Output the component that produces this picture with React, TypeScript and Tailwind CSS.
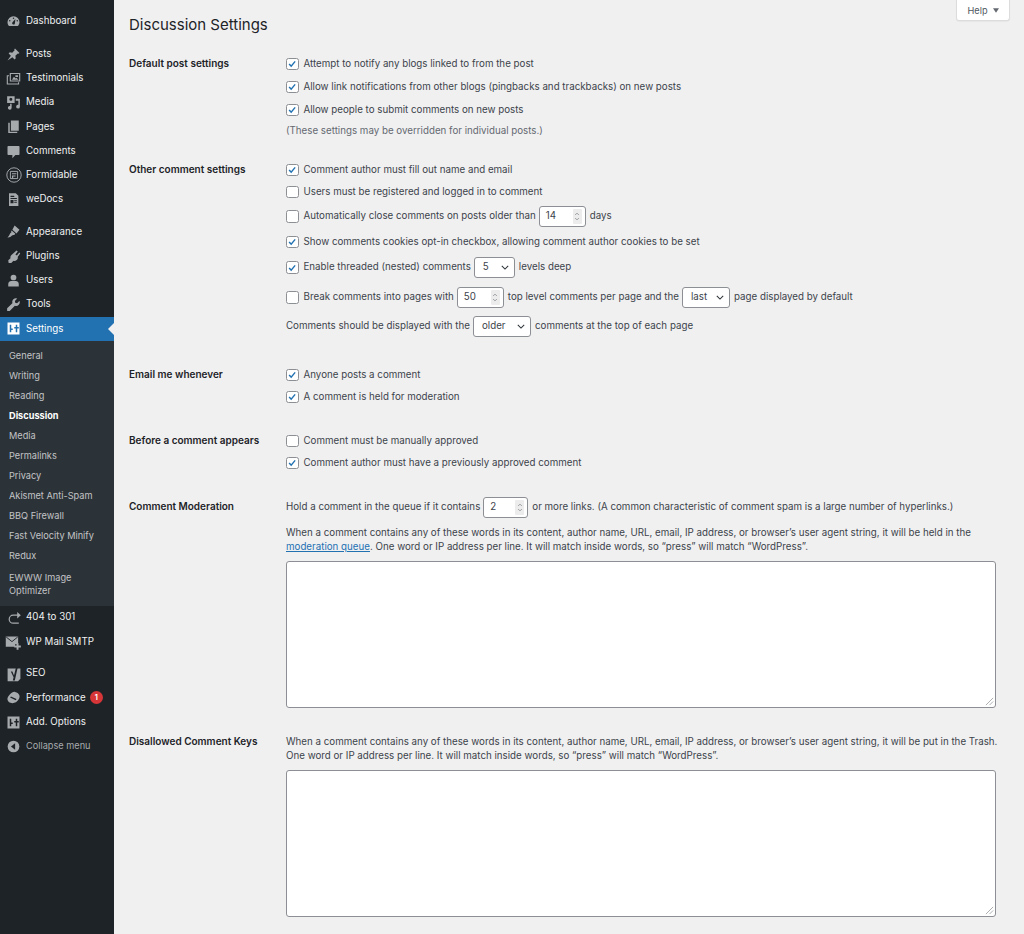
import type { ReactNode } from "react";

const font = "font-['Inter',sans-serif]";

function Glyph({ children }: { children: ReactNode }) {
  return <svg viewBox="0 0 20 20" className="h-[15px] w-[15px] fill-[#a7aaad]" aria-hidden="true">{children}</svg>;
}

const icons: Record<string, ReactNode> = {
  dashboard: <Glyph><path d="M10 3a8 8 0 0 0-8 8c0 2 .7 3.700 2 5h12a7.800 7.800 0 0 0 2-5 8 8 0 0 0-8-8zm0 1.500a1 1 0 1 1 0 2 1 1 0 0 1 0-2zM5 10a1 1 0 1 1 0-2 1 1 0 0 1 0 2zm6.500 3.500a2 2 0 0 1-3.400-1.500c.2-.8 4.400-5.500 4.400-5.500s-.4 6.300-1 7zM15 10a1 1 0 1 1 0-2 1 1 0 0 1 0 2z" fillRule="evenodd" /></Glyph>,
  posts: <Glyph><path d="M12 2l6 6-1.300 1-1-.5-3.200 3.200.5 3.300-1.500 1.500-3-3L2 18l4.500-6.500-3-3L5 7l3.300.5 3.200-3.200-.5-1z" /></Glyph>,
  testimonials: <Glyph><path fillRule="evenodd" d="M5 2.500h14v11.500H5zM6.500 4v8.500h11V4zM8 11.500l2.500-4 2.500 2.500 1-1 2.500 2.500zM12.500 5.500h3.500V8h-3.500zM1 5.500h3V7H2.500v9.500H16V15h1.500v3H1z" /></Glyph>,
  media: <Glyph><path fillRule="evenodd" d="M1.500 1.500h10v9h-10zM6.500 3.500a2 2 0 1 0 0 4 2 2 0 0 0 0-4zM13 5h5.500v10.500a2.500 2.500 0 1 1-2-2.400V7.500H13zM7.500 11.500v5.500a2.500 2.500 0 1 1-2-2.400v-3.100z" /></Glyph>,
  pages: <Glyph><path d="M6.500 2H17v13.500H6.500zM3 5h2v12h10v1.500H3z" /></Glyph>,
  comments: <Glyph><path d="M3 2.500h14a1 1 0 0 1 1 1v10a1 1 0 0 1-1 1h-4.500L8.500 19v-4.500H3a1 1 0 0 1-1-1v-10a1 1 0 0 1 1-1z" /></Glyph>,
  formidable: <svg viewBox="0 0 20 20" className="h-[16px] w-[16px]" aria-hidden="true"><circle cx="10" cy="10" r="9" fill="none" stroke="#a7aaad" strokeWidth="1.200" /><path d="M5.500 5.500h9v9h-9z" fill="none" stroke="#a7aaad" strokeWidth="1.200" /><path d="M7.500 7.800h5.500v1.300H7.500zM7.500 10.500h4.500v1.300H9v2H7.500z" fill="#a7aaad" /></svg>,
  wedocs: <Glyph><path fillRule="evenodd" d="M4 1.500h9l3.500 3.500v13.500H4zM6 5v1.500h5V5zM6 8v1.200h8.500V8zM6 10.500V15h4v-4.500zM11 10.500v1.200h3.500v-1.200zM11 13v1.200h3.500V13z" /></Glyph>,
  appearance: <Glyph><path d="M11.500 2l6.500 5.500-4 5-5.500-5zM7.500 8.500l5 4.500-1.500 1.800c-1.200-.6-2.400-.2-3.400 1-1.400 1.700-3.600 2.500-5.600 2.200 1.300-1.200 2.400-2.700 3-4.400.4-1.300 1.200-2.200 2.300-2.600l-.5-1z" /></Glyph>,
  plugins: <Glyph><path d="M14 2l1.700 1.200-3.200 4 2 1.500 3.200-4L19 6l-3.500 4.500c.7 1.500.2 3-1.200 4.200-1.500 1.200-3 1.500-4.300 1L7 18.500H3.500L3 15l3-2.800c-.4-1.500 0-3 1.300-4.200z" /></Glyph>,
  users: <Glyph><circle cx="10" cy="6" r="3.800" /><path d="M3 18v-3.500C3 12 5 10.500 7 10.500h6c2 0 4 1.500 4 4V18z" /></Glyph>,
  tools: <Glyph><path d="M18 5l-3.200 3.200-2.500-.5-.5-2.500L15 2a5 5 0 0 0-6.500 6.200L1.500 15v3.500H5l6.800-6.800A5 5 0 0 0 18 5z" /></Glyph>,
  settings: <svg viewBox="0 0 20 20" className="h-[15px] w-[15px]" aria-hidden="true"><path d="M2 2h16v16H2z" fill="#fff" /><path d="M5 5h2v5h2v2H7v3H5zM13 5h2v3h2v2h-2v5h-2v-5h-2V8h2z" fill="#2271b1" /></svg>,
  redirect: <svg viewBox="0 0 20 20" className="h-[16px] w-[16px] fill-none stroke-[#a7aaad]" strokeWidth="1.500" aria-hidden="true"><path d="M15 6.500H9a5 5 0 0 0 0 10h7" /><path d="M14 2.500l4.500 4-4.500 4z" fill="#a7aaad" stroke="none" /></svg>,
  mail: <svg viewBox="0 0 22 20" className="h-[16px] w-[17px]" aria-hidden="true"><path d="M1 3h16v10h-4v3H1z" fill="#a7aaad" /><path d="M1.500 3.500L9 9.500l7.500-6" fill="none" stroke="#1d2327" strokeWidth="1.200" /><path d="M15 11.500h2.500v3h3V17h-3v3H15v-3h-3v-2.500h3z" fill="#a7aaad" /></svg>,
  seo: <svg viewBox="0 0 20 20" className="h-[16px] w-[16px]" aria-hidden="true"><path d="M2 3h16v13l-3 3H2z" fill="#a7aaad" /><path d="M6 7h2l2 5 2.500-10.500h2.200L11 18H8.500l1-4z" fill="#1d2327" /></svg>,
  performance: <Glyph><path fillRule="evenodd" d="M12 2.500c3 .5 5.500 2.500 6 5 .4 2-.5 4-1.500 5.500-1.500 2.500-4.500 4.500-8 4.500-3.500 0-6-2-6.500-4.500-.5-2.200.5-4.500 2.500-6.500C6.500 4.500 9 2.200 12 2.500zM6.500 8.500l-1 1.500 7.500 3.500 1-1.500z" /></Glyph>,
  options: <Glyph><path fillRule="evenodd" d="M2 2h16v16H2zM5 5v10h2v-3h2v-2H7V5zM13 5v3h-2v2h2v5h2v-5h2V8h-2V5z" /></Glyph>,
};

const groupOne = [["Dashboard", "dashboard"]];
const groupTwo = [["Posts", "posts"], ["Testimonials", "testimonials"], ["Media", "media"], ["Pages", "pages"], ["Comments", "comments"], ["Formidable", "formidable"], ["weDocs", "wedocs"]];
const groupThree = [["Appearance", "appearance"], ["Plugins", "plugins"], ["Users", "users"], ["Tools", "tools"]];
const groupFour = [["404 to 301", "redirect"], ["WP Mail SMTP", "mail"]];
const submenu = ["General", "Writing", "Reading", "Discussion", "Media", "Permalinks", "Privacy", "Akismet Anti-Spam", "BBQ Firewall", "Fast Velocity Minify", "Redux"];

function MenuItem({ label, icon, badge }: { label: string; icon: string; badge?: string }) {
  return <div className="flex h-[24.25px] items-center text-[9.75px] text-[#f0f0f1]">
    <span className="flex w-[26px] justify-center pl-[1px]">{icons[icon]}</span>
    <span>{label}</span>
    {badge ? <span className="ml-[4px] flex h-[13px] w-[13px] items-center justify-center rounded-full bg-[#d63638] text-[7.5px] font-semibold text-white">{badge}</span> : null}
  </div>;
}

function Sidebar() {
  return <aside className="flex w-[114px] shrink-0 flex-col bg-[#1d2327] pt-[9px]">
    {groupOne.map(([l, i]) => <MenuItem key={l} label={l} icon={i} />)}
    <div className="h-[8.75px]" />
    {groupTwo.map(([l, i]) => <MenuItem key={l} label={l} icon={i} />)}
    <div className="h-[8px]" />
    {groupThree.map(([l, i]) => <MenuItem key={l} label={l} icon={i} />)}
    <div className="relative flex h-[24.25px] items-center bg-[#2271b1] text-[9.75px] text-white">
      <span className="flex w-[26px] justify-center pl-[1px]">{icons.settings}</span>
      <span>Settings</span>
      <span className="absolute right-0 top-[6px] border-y-[6px] border-r-[6px] border-y-transparent border-r-[#f0f0f1]" />
    </div>
    <div className="bg-[#2c3338] pb-[9px] pl-[9px] pt-[5px] text-[9.2px] text-[#c3c4c7]">
      {submenu.map((s) => <div key={s} className={`flex h-[20px] items-center ${s === "Discussion" ? "font-bold text-white" : ""}`}>{s}</div>)}
      <div className="pt-[4.5px] leading-[13px]">EWWW Image<br />Optimizer</div>
    </div>
    {groupFour.map(([l, i]) => <MenuItem key={l} label={l} icon={i} />)}
    <div className="h-[7.5px]" />
    <MenuItem label="SEO" icon="seo" />
    <MenuItem label="Performance" icon="performance" badge="1" />
    <MenuItem label="Add. Options" icon="options" />
    <div className="flex h-[24px] items-center text-[9.2px] text-[#a7aaad]">
      <span className="flex w-[26px] justify-center pl-[1px]"><svg viewBox="0 0 20 20" className="h-[13px] w-[13px]" aria-hidden="true"><circle cx="10" cy="10" r="9" fill="#a7aaad" /><path d="M12.5 5v10L6 10z" fill="#1d2327" /></svg></span>
      <span>Collapse menu</span>
    </div>
  </aside>;
}

function Check({ on }: { on?: boolean }) {
  return <span className="mr-[5px] flex h-[12.5px] w-[12.5px] shrink-0 items-center justify-center rounded-[2.5px] border border-[#8c8f94] bg-white">
    {on ? <svg viewBox="0 0 12 12" className="h-[10px] w-[10px] fill-none stroke-[#2271b1]" strokeWidth="1.7" aria-hidden="true"><path d="M2.5 6l2.500 2.500L9.800 2.800" /></svg> : null}
  </span>;
}

function CheckRow({ on, className = "", children }: { on?: boolean; className?: string; children: ReactNode }) {
  return <div className={`flex items-center ${className}`}><Check on={on} />{children}</div>;
}

function NumberBox({ value, width }: { value: string; width: string }) {
  return <span className={`ml-[3px] mr-[4px] flex h-[21px] items-center justify-between rounded-[3px] border border-[#8c8f94] bg-white pl-[6px] pr-[3px] ${width}`}>
    <span>{value}</span>
    <span className="flex h-[15px] w-[9px] items-center justify-center rounded-[1px] bg-[#ececec]">
      <svg viewBox="0 0 8 14" className="h-[11px] w-[6px] fill-none stroke-[#8c8f94]" strokeWidth="1.1" aria-hidden="true"><path d="M1.5 5L4 2.500 6.500 5M1.500 9L4 11.500 6.500 9" /></svg>
    </span>
  </span>;
}

function SelectBox({ value, width }: { value: string; width: string }) {
  return <span className={`ml-[3px] mr-[4px] flex h-[21px] items-center justify-between rounded-[3px] border border-[#8c8f94] bg-white pl-[8px] pr-[5px] ${width}`}>
    <span>{value}</span>
    <svg viewBox="0 0 10 6" className="h-[5px] w-[8px] fill-none stroke-[#2c3338]" strokeWidth="1.3" aria-hidden="true"><path d="M1 1l4 4 4-4" /></svg>
  </span>;
}

function Section({ label, className, children }: { label: string; className: string; children: ReactNode }) {
  return <section className={`flex ${className}`}>
    <h2 className="-mt-[1.5px] w-[157px] shrink-0 text-[10px] font-semibold leading-[14px] text-[#1d2327]">{label}</h2>
    <div className="min-w-0 grow">{children}</div>
  </section>;
}

function BigBox({ className }: { className: string }) {
  return <div className={`relative w-[710px] rounded-[3px] border border-[#8c8f94] bg-white ${className}`}>
    <svg viewBox="0 0 10 10" className="absolute bottom-[1px] right-[1px] h-[9px] w-[9px] stroke-[#8c8f94]" strokeWidth="0.8" aria-hidden="true"><path d="M1 9l8-8M5 9l4-4" /></svg>
  </div>;
}

export default function App() {
  return <div className={`flex h-[934px] w-[1024px] overflow-hidden bg-[#f0f0f1] ${font}`}>
    <Sidebar />
    <main className="relative grow pl-[15px] text-[9.75px] text-[#3c434a]">
      <div className="absolute right-[14px] top-0 flex h-[21px] w-[54px] items-center justify-center gap-[5px] rounded-b-[3px] border border-t-0 border-[#dcdcde] bg-white pt-[1px] text-[9.2px] text-[#50575e] shadow-[0_1px_1px_rgba(0,0,0,0.04)]">
        Help
        <svg viewBox="0 0 8 6" className="h-[5px] w-[6px] fill-[#646970]" aria-hidden="true"><path d="M0 0h8L4 6z" /></svg>
      </div>
      <h1 className="pt-[14px] text-[15px] font-normal leading-[22px] text-[#1d2327]">Discussion Settings</h1>

      <Section label="Default post settings" className="mt-[21px]">
        <div className="flex flex-col">
          <CheckRow on className="h-[14px]">Attempt to notify any blogs linked to from the post</CheckRow>
          <CheckRow on className="mt-[9px] h-[14px]">Allow link notifications from other blogs (pingbacks and trackbacks) on new posts</CheckRow>
          <CheckRow on className="mt-[9px] h-[14px]">Allow people to submit comments on new posts</CheckRow>
          <p className="mt-[7px] h-[14px] leading-[14px] text-[#646970]">(These settings may be overridden for individual posts.)</p>
        </div>
      </Section>

      <Section label="Other comment settings" className="mt-[25px]">
        <CheckRow on className="h-[14px]">Comment author must fill out name and email</CheckRow>
        <CheckRow className="mt-[8px] h-[14px]">Users must be registered and logged in to comment</CheckRow>
        <CheckRow className="mt-[7px] h-[21px]">Automatically close comments on posts older than<NumberBox value="14" width="w-[47px]" />days</CheckRow>
        <CheckRow on className="mt-[8px] h-[14px]">Show comments cookies opt-in checkbox, allowing comment author cookies to be set</CheckRow>
        <CheckRow on className="mt-[8px] h-[21px]">Enable threaded (nested) comments<SelectBox value="5" width="w-[41px]" />levels deep</CheckRow>
        <CheckRow className="mt-[9px] h-[21px]">Break comments into pages with<NumberBox value="50" width="w-[47px]" />top level comments per page and the<SelectBox value="last" width="w-[48px]" />page displayed by default</CheckRow>
        <div className="mt-[8px] flex h-[21px] items-center">Comments should be displayed with the<SelectBox value="older" width="w-[58px]" />comments at the top of each page</div>
      </Section>

      <Section label="Email me whenever" className="mt-[31px]">
        <CheckRow on className="h-[14px]">Anyone posts a comment</CheckRow>
        <CheckRow on className="mt-[8px] h-[14px]">A comment is held for moderation</CheckRow>
      </Section>

      <Section label="Before a comment appears" className="mt-[30px]">
        <CheckRow className="h-[14px]">Comment must be manually approved</CheckRow>
        <CheckRow on className="mt-[8px] h-[14px]">Comment author must have a previously approved comment</CheckRow>
      </Section>

      <Section label="Comment Moderation" className="mt-[30px]">
        <div className="flex h-[14px] items-center">Hold a comment in the queue if it contains<NumberBox value="2" width="w-[45px]" />or more links. (A common characteristic of comment spam is a large number of hyperlinks.)</div>
        <p className="mt-[12px] leading-[14px]">When a comment contains any of these words in its content, author name, URL, email, IP address, or browser’s user agent string, it will be held in the <a className="text-[#2271b1] underline">moderation queue</a>. One word or IP address per line. It will match inside words, so “press” will match “WordPress”.</p>
        <BigBox className="mt-[7px] h-[147px]" />
      </Section>

      <Section label="Disallowed Comment Keys" className="mt-[27px]">
        <p className="max-w-[712px] leading-[14px]">When a comment contains any of these words in its content, author name, URL, email, IP address, or browser’s user agent string, it will be put in the Trash. One word or IP address per line. It will match inside words, so “press” will match “WordPress”.</p>
        <BigBox className="mt-[7px] h-[147px]" />
      </Section>
    </main>
  </div>;
}
